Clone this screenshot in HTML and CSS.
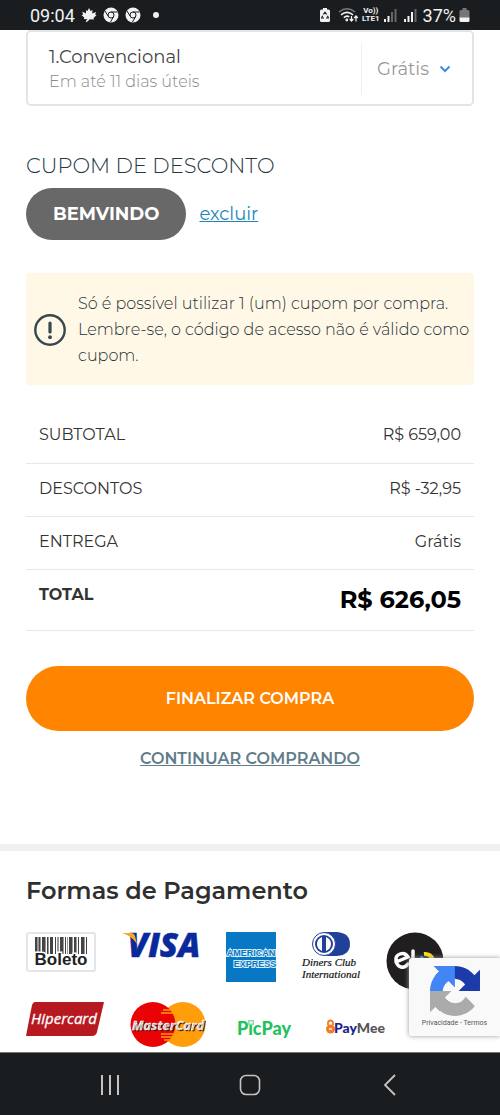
FILE: index.html
```html
<!DOCTYPE html>
<html lang="pt-BR">
<head>
<meta charset="utf-8">
<meta name="viewport" content="width=device-width, initial-scale=1">
<title>Carrinho</title>
<link rel="stylesheet" href="styles.css">
</head>
<body>
<header class="status">
  <div class="status-group">
    <span class="clock">09:04</span>
    <svg width="16" height="16" viewBox="0 0 16 16" fill="#f2f2f2"><path d="M8 1l1.500 3 2-1-.3 3.500L15 5l-.8 2.500 1.300.8-3 2.700.4 1.500-4-.2-3.300 3-.8-1 1.600-2-3.600-.3.500-1.500L.5 8.200l1.600-.8L1.200 4.500l3.800 2V3.300L6.500 4z"/></svg>
    <svg width="16" height="16" viewBox="0 0 16 16"><circle cx="8" cy="8" r="7.500" fill="#f2f2f2"/><g fill="none" stroke="#1a1d1f" stroke-width="1"><circle cx="8" cy="8" r="3"/><path d="M8 5h6.500M5.400 9.500L2 4M10.600 9.500L7.500 15"/></g></svg>
    <svg width="16" height="16" viewBox="0 0 16 16"><circle cx="8" cy="8" r="7.500" fill="#f2f2f2"/><g fill="none" stroke="#1a1d1f" stroke-width="1"><circle cx="8" cy="8" r="3"/><path d="M8 5h6.500M5.400 9.500L2 4M10.600 9.500L7.500 15"/></g></svg>
    <span class="dot"></span>
  </div>
  <div class="status-group right">
    <svg width="12" height="16" viewBox="0 0 12 16"><path d="M4 1h4v1.500h1.500q1.500 0 1.500 1.500v9.500q0 1.500-1.500 1.500h-7Q1 15 1 13.500V4q0-1.500 1.500-1.500H4z" fill="#f2f2f2"/><path d="M4.300 7.500L6 5.200l1.700 2.300M8.500 8.800l.8 2.200H7M5 11H2.700l.9-2.200" fill="none" stroke="#1a1d1f" stroke-width="1.200"/></svg>
    <svg class="wifi" width="21" height="16" viewBox="0 0 21 16" fill="none" stroke="#f2f2f2" stroke-width="1.600"><path d="M1 5q8-6.500 16 0" stroke="#777"/><path d="M3 7.800q6-4.800 12 0M5.800 10.600q3.200-2.600 5.400-.6"/><circle cx="8.800" cy="13" r=".6"/><path d="M13.500 9v5m-1.800-2l1.800 2 1.800-2M18 14.500V9m-1.800 2L18 9l1.800 2" stroke-width="1.200"/></svg>
    <span class="lte"><span>Vo))</span><span>LTE1</span></span>
    <svg width="14" height="15" viewBox="0 0 14 15"><path d="M1 11h2v3H1zM4.500 8h2v6h-2z" fill="#f2f2f2"/><path d="M8 4h2v10H8zM11.500 1h2v13h-2z" fill="#666"/></svg>
    <svg class="signal" width="14" height="15" viewBox="0 0 14 15"><path d="M1 11h2v3H1zM4.500 8h2v6h-2zM8 4h2v10H8z" fill="#f2f2f2"/><path d="M11.500 1h2v13h-2z" fill="#666"/></svg>
    <span class="percent">37%</span>
    <svg width="11" height="15" viewBox="0 0 11 15"><path d="M3.500 0h4v2H9q1.500 0 1.500 1.500V10H.5V3.500Q.5 2 2 2h1.500z" fill="#777"/><path d="M.5 9.500h10v3Q10.500 14 9 14H2Q.5 14 .5 12.500z" fill="#f2f2f2"/></svg>
  </div>
</header>

<main class="page">
  <section class="checkout">
    <button class="shipping" type="button">
      <span class="shipping-info">
        <span class="shipping-name">1.Convencional</span>
        <span class="shipping-time">Em até 11 dias úteis</span>
      </span>
      <span class="shipping-price">Grátis
        <svg width="12" height="8" viewBox="0 0 12 8" fill="none" stroke="#3b8de0" stroke-width="2"><path d="M1.500 1.500L6 6l4.500-4.500"/></svg>
      </span>
    </button>

    <h2 class="coupon-title">CUPOM DE DESCONTO</h2>
    <div class="coupon">
      <span class="coupon-code">BEMVINDO</span>
      <a class="coupon-remove" href="#">excluir</a>
    </div>

    <div class="notice">
      <svg class="notice-icon" width="32" height="32" viewBox="0 0 32 32"><circle cx="16" cy="16" r="14.700" fill="none" stroke="#37474f" stroke-width="2.400"/><path d="M16 9v9" stroke="#37474f" stroke-width="3.200" stroke-linecap="round"/><circle cx="16" cy="23.200" r="1.900" fill="#37474f"/></svg>
      <p class="notice-text">Só é possível utilizar 1 (um) cupom por compra. Lembre-se, o código de acesso não é válido como cupom.</p>
    </div>

    <table class="totals">
      <tr><th scope="row">SUBTOTAL</th><td>R$ 659,00</td></tr>
      <tr><th scope="row">DESCONTOS</th><td>R$ -32,95</td></tr>
      <tr><th scope="row">ENTREGA</th><td>Grátis</td></tr>
      <tr class="grand"><th scope="row">TOTAL</th><td>R$ 626,05</td></tr>
    </table>

    <button class="finish" type="button">FINALIZAR COMPRA</button>
    <a class="continue" href="#">CONTINUAR COMPRANDO</a>
  </section>

  <section class="payment">
    <h2 class="payment-title">Formas de Pagamento</h2>
    <div class="brands">
      <svg width="70" height="40" viewBox="0 0 70 40"><rect x="1" y="1" width="68" height="38" rx="2" fill="#fff" stroke="#e6e6ea" stroke-width="2"/><path d="M9 5h2v17H9zM13 5h1v17h-1zM16 5h3v17h-3zM21 5h1v17h-1zM24 5h3v17h-3zM29 5h1v17h-1zM34 5h3v17h-3zM39 5h1v17h-1zM43 5h3v17h-3zM48 5h2v17h-2zM52 5h1v17h-1zM55 5h3v17h-3zM60 5h1v17h-1z" fill="#444"/><path d="M11 5h2v17h-2zM14 5h1v17h-1zM19 5h1v17h-1zM22 5h1v17h-1zM31 5h2v17h-2zM37 5h1v17h-1zM41 5h1v17h-1zM46 5h1v17h-1zM50 5h1v17h-1zM58 5h1v17h-1z" fill="#999"/><text class="t-boleto" x="35" y="33" text-anchor="middle">Boleto</text></svg>
      <svg width="78" height="28" viewBox="0 0 78 28"><text class="t-visa" x="42" y="25" text-anchor="middle">VISA</text><path d="M0 1h9q3 0 4 3l2 8Q10 4 0 1z" fill="#f5a623"/></svg>
      <svg width="50" height="50" viewBox="0 0 50 50"><rect width="50" height="50" fill="#0878c4"/><text class="t-amex" x="25" y="24" text-anchor="middle">AMERICAN</text><text class="t-amex" x="29" y="35" text-anchor="middle">EXPRESS</text></svg>
      <svg width="58" height="48" viewBox="0 0 58 48"><path d="M22 0h13q13 1 13 12T35 24H22z" fill="#21409a"/><circle cx="22" cy="12" r="11.500" fill="#fff" stroke="#21409a"/><circle cx="22" cy="12" r="9" fill="#21409a"/><path d="M20 5q-5 2-5 7t5 7zM24 5q5 2 5 7t-5 7z" fill="#fff"/><text class="t-diners" x="27" y="34" text-anchor="middle">Diners Club</text><text class="t-diners" x="29" y="46" text-anchor="middle">International</text></svg>
      <svg width="58" height="58" viewBox="0 0 58 58"><circle cx="29" cy="29" r="28.500" fill="#211e1f"/><g fill="none" stroke="#fff" stroke-width="3.500" stroke-linecap="round"><path d="M10 30l12-5q-3-5-8-3t-4 7 5 6 7-3M27 19v12q0 3 3 3"/></g><path d="M34 30a8 8 0 0 1 3-5" fill="none" stroke="#20a5df" stroke-width="4"/><path d="M38 22a8 8 0 0 1 9 6" fill="none" stroke="#f9e218" stroke-width="4"/></svg>
      <svg width="78" height="34" viewBox="0 0 78 34"><path d="M9 0h69l-7 30q-1 4-5 4H0L6 3q1-3 3-3z" fill="#b71921"/><text class="t-hiper" x="38" y="22" text-anchor="middle">Hipercard</text></svg>
      <svg width="78" height="46" viewBox="0 0 78 46"><circle cx="53" cy="22.500" r="22.500" fill="#ff9d0a"/><circle cx="23" cy="22.500" r="22.500" fill="#ea0305"/><path d="M33 8h9M31 11h13M31 32h14M31 35h12M34 38h8" stroke="#ff9d0a" stroke-width="1.300"/><text class="t-master" x="38" y="28" text-anchor="middle">MasterCard</text></svg>
      <svg width="60" height="46" viewBox="0 0 60 46"><text class="t-picpay" x="30" y="33" text-anchor="middle">PicPay</text><path d="M14 18h6v5h-6z" fill="#8be0a8"/><path d="M15.500 19.500h3v2h-3z" fill="#fff"/></svg>
      <svg width="66" height="46" viewBox="0 0 66 46"><circle cx="10.500" cy="27" r="4.500" fill="#f47b20"/><path d="M8 23v-2a2.500 2.500 0 0 1 5 0V23" fill="none" stroke="#f47b20" stroke-width="1.800"/><path d="M9 27h3" stroke="#fff" stroke-width="1.500"/><text class="t-paymee" x="14" y="31">Pay<tspan class="mee">Mee</tspan></text></svg>
    </div>
  </section>
</main>

<aside class="captcha">
  <svg width="50" height="50" viewBox="0 0 64 64"><path fill="#1c3aa9" d="M64 31.955l-.033-1.370V4.687l-7.160 7.160C50.947 4.674 42.033.093 32.050.093c-10.390 0-19.622 4.960-25.450 12.640l11.736 11.860a15.550 15.550 0 0 1 4.754-5.334c2.050-1.600 4.952-2.906 8.960-2.906.484 0 .858.057 1.132.163 4.965.392 9.270 3.132 11.804 7.110l-8.307 8.307L64 31.953"/><path fill="#4285f4" d="M31.862.094l-1.370.033H4.594l7.160 7.160C4.580 13.147 0 22.060 0 32.046c0 10.390 4.960 19.622 12.640 25.450L24.500 45.760a15.550 15.550 0 0 1-5.334-4.754c-1.600-2.050-2.906-4.952-2.906-8.960 0-.484.057-.858.163-1.132.392-4.965 3.132-9.270 7.110-11.804l8.307 8.307L31.860.095"/><path fill="#ababab" d="M.001 32.045l.033 1.370v25.898l7.160-7.160c5.860 7.173 14.774 11.754 24.760 11.754 10.390 0 19.622-4.960 25.450-12.640l-11.736-11.860a15.550 15.550 0 0 1-4.754 5.334c-2.050 1.600-4.952 2.906-8.960 2.906-.484 0-.858-.057-1.132-.163-4.965-.392-9.270-3.132-11.804-7.110l8.307-8.307c-10.522.040-22.400.066-27.295-.005"/></svg>
  <span class="captcha-links"><a href="#">Privacidade</a> - <a href="#">Termos</a></span>
</aside>

<nav class="navbar">
  <button type="button" aria-label="Recentes"><svg width="22" height="22" viewBox="0 0 22 22" stroke="#c4c4c4" stroke-width="2"><path d="M3 1v20M11 1v20M19 1v20"/></svg></button>
  <button type="button" aria-label="Início"><svg width="22" height="22" viewBox="0 0 22 22" fill="none" stroke="#c4c4c4" stroke-width="1.600"><rect x="1.500" y="1.500" width="19" height="19" rx="5.500"/></svg></button>
  <button type="button" aria-label="Voltar"><svg width="22" height="22" viewBox="0 0 22 22" fill="none" stroke="#c4c4c4" stroke-width="1.800"><path d="M16 1L6 11l10 10"/></svg></button>
</nav>
</body>
</html>
```
FILE: styles.css
```css
* { box-sizing: border-box; }
body {
  margin: 0;
  min-height: 100vh;
  display: flex;
  flex-direction: column;
  position: relative;
  background: #fff;
  color: #333;
  font-family: Montserrat, Inter, "Open Sans", sans-serif;
  font-size: 16px;
}
button { font: inherit; color: inherit; border: 0; background: none; cursor: pointer; }
svg { display: block; flex: none; overflow: visible; }
h2, p { margin: 0; }

.status {
  height: 30px;
  padding: 0 30px;
  display: flex;
  align-items: center;
  justify-content: space-between;
  background: #1a1d1f;
  color: #f2f2f2;
  font-family: Roboto, sans-serif;
  font-size: 18px;
}
.status-group { display: flex; align-items: center; gap: 6px; }
.status-group.right { gap: 3px; }
.wifi { margin-left: 4px; }
.signal { margin: 0 3px; }
.dot { width: 6px; height: 6px; margin-left: 6px; border-radius: 50%; background: #f2f2f2; }
.lte { display: flex; flex-direction: column; align-items: center; font-size: 8px; line-height: 8px; font-weight: 700; }

.page { flex: 1; }
.checkout { padding: 0 26px 75px; display: flex; flex-direction: column; }

.shipping {
  height: 76px;
  padding: 2px 21px 0 21px;
  display: flex;
  align-items: center;
  justify-content: space-between;
  border: 2px solid #e3e4e6;
  border-radius: 5px;
  text-align: left;
}
.shipping-info { display: flex; flex-direction: column; }
.shipping-name { font-size: 18px; line-height: 26px; color: #444; }
.shipping-time { font-size: 16px; line-height: 24px; color: #8a8a8a; font-weight: 300; }
.shipping-price {
  height: 52px;
  padding-left: 15px;
  display: flex;
  align-items: center;
  gap: 10px;
  border-left: 1px solid #eee;
  color: #999;
  font-size: 18px;
}

.coupon-title { margin-top: 46px; font-size: 21px; line-height: 28px; font-weight: 300; color: #263840; }
.coupon { margin-top: 8px; display: flex; align-items: center; gap: 13px; }
.coupon-code {
  padding: 0 27px;
  border-radius: 26px;
  background: #686868;
  color: #fff;
  font-size: 18px;
  line-height: 52px;
  font-weight: 700;
}
.coupon-remove { font-size: 18px; color: #1d87b8; }

.notice {
  margin-top: 33px;
  padding: 18px 0 16px 8px;
  display: flex;
  align-items: center;
  gap: 12px;
  border-radius: 3px;
  background: #fff8e6;
}
.notice-text { font-size: 16px; line-height: 26px; font-weight: 300; color: #1f3038; }

.totals { margin-top: 25px; width: 100%; border-collapse: collapse; line-height: 20px; }
.totals th, .totals td { height: 53px; padding: 15px 13px 0; vertical-align: top; border-bottom: 1px solid #e8e8e8; font-weight: 400; }
.totals th { text-align: left; }
.totals td { text-align: right; }
.totals .grand th, .totals .grand td { height: 61px; font-weight: 700; }
.totals .grand td { padding-top: 14px; font-size: 24px; line-height: 32px; color: #000; }

.finish { margin-top: 35px; height: 65px; border-radius: 33px; background: #ff8400; color: #fff; font-weight: 600; }
.continue { margin-top: 18px; align-self: center; line-height: 20px; font-weight: 600; color: #607d8b; }

.payment { padding: 24px 26px 0; border-top: 7px solid #f0f0f0; }
.payment-title { font-size: 24px; line-height: 32px; font-weight: 600; color: #2f2f2f; }
.brands { margin-top: 25px; display: flex; flex-wrap: wrap; align-items: flex-start; gap: 12px 26px; }

.t-boleto { font: 700 17px "Liberation Sans", sans-serif; fill: #222; stroke: #fff; stroke-width: 3px; paint-order: stroke; }
.t-visa { font: italic 800 33px "Open Sans", sans-serif; fill: #0a2a9c; stroke: #0a2a9c; stroke-width: 0.5px; }
.t-amex { font: 700 9px "Liberation Sans", sans-serif; fill: #0878c4; stroke: #d8edf9; stroke-width: 2px; paint-order: stroke; }
.t-diners { font: italic 11px "Liberation Serif", serif; fill: #111; stroke: #111; stroke-width: 0.2px; }
.t-hiper { font: italic 15px "Open Sans", sans-serif; fill: #fff; stroke: #fff; stroke-width: 0.3px; }
.t-master { font: italic 700 13px "Open Sans", sans-serif; fill: #fff; stroke: #fff; stroke-width: 0.3px; text-shadow: 1px 1px 0 #3b1508; }
.t-picpay { font: 900 18px Lato, sans-serif; fill: #21c25e; }
.t-paymee { font: 900 14px Lato, sans-serif; fill: #1b1f8f; }
.mee { fill: #555; }

.captcha {
  position: absolute;
  right: 0;
  bottom: 79px;
  width: 91px;
  height: 78px;
  padding-top: 8px;
  display: flex;
  flex-direction: column;
  align-items: center;
  gap: 2px;
  border-radius: 3px 0 0 3px;
  background: #f9f9f9;
  box-shadow: 0 0 5px #999;
}
.captcha-links { font: 7px/10px Roboto, sans-serif; color: #555; }
.captcha-links a { color: inherit; text-decoration: none; }

.navbar {
  height: 63px;
  padding-top: 2px;
  display: flex;
  align-items: center;
  justify-content: center;
  gap: 100px;
  border-top: 1px solid #777;
  background: #1a1d1f;
}
.navbar button { padding: 4px 9px; }
```
